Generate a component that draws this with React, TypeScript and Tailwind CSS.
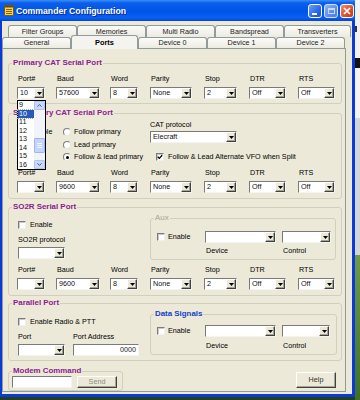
import React from "react";

const txt = "text-[7.2px] leading-[8px] text-black whitespace-nowrap";

function Arrow() {
  return (
    <div className="w-[10px] h-[10px] shrink-0 bg-[#ece9d8] border border-t-white border-l-white border-b-[#404040] border-r-[#404040] shadow-[inset_-1px_-1px_0_#a3a396] flex items-center justify-center">
      <svg width="5" height="3" viewBox="0 0 5 3">
        <path d="M0 0H5L2.5 3Z" fill="#000" />
      </svg>
    </div>
  );
}

function Combo({ w, value = "", children }: { w: string; value?: string; children?: React.ReactNode }) {
  return (
    <div className={`relative h-[12px] ${w} flex bg-white border border-t-[#7a7a7a] border-l-[#7a7a7a] border-b-[#f4f4f0] border-r-[#f4f4f0]`}>
      <span className="flex-1 pl-[2px] text-[7.2px] leading-[10px] text-[#111] overflow-hidden whitespace-nowrap">{value}</span>
      <Arrow />
      {children}
    </div>
  );
}

function TextBox({ w, value = "" }: { w: string; value?: string }) {
  return (
    <div className={`h-[12px] ${w} flex justify-end bg-white border border-t-[#7a7a7a] border-l-[#7a7a7a] border-b-[#f4f4f0] border-r-[#f4f4f0]`}>
      <span className="pr-[2px] text-[7.2px] leading-[10px] text-[#222]">{value}</span>
    </div>
  );
}

function Check({ checked }: { checked?: boolean }) {
  return (
    <div className="w-[8px] h-[8px] shrink-0 bg-white border border-t-[#7c7c7c] border-l-[#7c7c7c] border-b-[#f0f0f0] border-r-[#f0f0f0] shadow-[inset_1px_1px_0_#c8c8c8] flex items-center justify-center">
      {checked && (
        <svg width="6" height="6" viewBox="0 0 6 6">
          <path d="M0.8 2.8L2.3 4.4L5.2 1.2" stroke="#000" strokeWidth="1.3" fill="none" />
        </svg>
      )}
    </div>
  );
}

function Radio({ checked }: { checked?: boolean }) {
  return (
    <div className="w-[8px] h-[8px] shrink-0 rounded-full bg-white border border-t-[#7c7c7c] border-l-[#7c7c7c] border-b-[#e6e6e0] border-r-[#e6e6e0] flex items-center justify-center">
      {checked && <div className="w-[3px] h-[3px] rounded-full bg-black" />}
    </div>
  );
}

function Group({
  title,
  cls,
  tc,
  children,
}: {
  title: string;
  cls: string;
  tc: string;
  children?: React.ReactNode;
}) {
  return (
    <div className={`relative shrink-0 border border-[#d0d0bf] rounded-[3px] ${cls}`}>
      <span className={`absolute left-[3px] top-[-6px] px-[1px] bg-[#ece9d8] text-[7.9px] leading-[10px] whitespace-nowrap ${tc}`}>
        {title}
      </span>
      {children}
    </div>
  );
}

function DropList() {
  const items = ["9", "10", "11", "12", "13", "14", "15", "16"];
  return (
    <div className="absolute left-[-1px] top-[12px] w-[29px] h-[70px] z-30 flex bg-white border border-black">
      <div className="w-[16px] flex flex-col">
        {items.map((it) => (
          <div
            key={it}
            className={`h-[8.5px] pl-[1px] text-[7.2px] leading-[8.5px] ${
              it === "10" ? "bg-[#2858b8] text-white outline outline-1 outline-dotted outline-[#9ab]" : "text-[#111]"
            }`}
          >
            {it}
          </div>
        ))}
      </div>
      <div className="w-[11px] flex flex-col bg-[#f2f3f8]">
        <div className="h-[9px] bg-[#c9d8fb] border border-[#b0c4f2] rounded-[1px] flex items-center justify-center">
          <svg width="5" height="3" viewBox="0 0 5 3">
            <path d="M0.5 2.6L2.5 0.6L4.5 2.6" stroke="#3c5a9a" strokeWidth="1" fill="none" />
          </svg>
        </div>
        <div className="h-[28px]" />
        <div className="h-[15px] bg-[#c3d5fc] border border-[#9db6ee] rounded-[1px] flex flex-col items-center justify-center gap-[1px]">
          <div className="w-[5px] h-[1px] bg-[#eef3ff]" />
          <div className="w-[5px] h-[1px] bg-[#eef3ff]" />
          <div className="w-[5px] h-[1px] bg-[#eef3ff]" />
        </div>
        <div className="flex-1" />
        <div className="h-[9px] bg-[#c9d8fb] border border-[#b0c4f2] rounded-[1px] flex items-center justify-center">
          <svg width="5" height="3" viewBox="0 0 5 3">
            <path d="M0.5 0.4L2.5 2.4L4.5 0.4" stroke="#3c5a9a" strokeWidth="1" fill="none" />
          </svg>
        </div>
      </div>
    </div>
  );
}

const labels = ["Port#", "Baud", "Word", "Parity", "Stop", "DTR", "RTS"];
const widths = ["w-[28px]", "w-[44px]", "w-[28px]", "w-[42px]", "w-[33px]", "w-[37px]", "w-[37px]"];

function PortRow({ values, list }: { values: string[]; list?: boolean }) {
  return (
    <div className="grid grid-cols-[39px_54px_40px_54px_45px_49px_37px]">
      {labels.map((l, i) => (
        <div key={l} className="flex flex-col">
          <span className={`${txt} pl-[1px] h-[8px]`}>{l}</span>
          <div className="mt-[4px]">
            <Combo w={widths[i]} value={values[i]}>
              {list && i === 0 && <DropList />}
            </Combo>
          </div>
        </div>
      ))}
    </div>
  );
}

function TitleBar() {
  return (
    <div className="h-[21px] shrink-0 flex items-center bg-[linear-gradient(180deg,#3d8ff8_0%,#0b5fec_14%,#0054e6_55%,#0860f4_85%,#0345d2_100%)]">
      <svg className="ml-[4px]" width="10" height="11" viewBox="0 0 10 11">
        <rect x="0.5" y="0.5" width="9" height="10" fill="#f3d35a" stroke="#7a5a10" />
        <rect x="0.5" y="0.5" width="9" height="2" fill="#6a4a0c" />
        <path d="M2 4.5H8M2 6.5H8M2 8.5H8" stroke="#7a5a10" strokeWidth="0.9" />
      </svg>
      <span className="ml-[2px] text-white font-bold text-[8.7px] leading-[10px] [text-shadow:1px_1px_0_#0c2a8c] whitespace-nowrap">
        Commander Configuration
      </span>
      <div className="ml-auto mr-[1px] flex gap-[2px]">
        <div className="w-[14px] h-[14px] rounded-[3px] border border-white bg-[linear-gradient(135deg,#6aa0ff,#2a68ec_60%,#1c55d8)] relative">
          <div className="absolute left-[3px] top-[8px] w-[5px] h-[2px] bg-white" />
        </div>
        <div className="w-[14px] h-[14px] rounded-[3px] border border-[#d8e4fc] bg-[linear-gradient(135deg,#8fb6fb,#5b8cf0_60%,#4d7ce6)] relative">
          <div className="absolute left-[3px] top-[3px] w-[7px] h-[6px] border border-t-[2px] border-[#c8d8fa]" />
        </div>
        <div className="w-[14px] h-[14px] rounded-[3px] border border-white bg-[linear-gradient(135deg,#f0906c,#e0532e_55%,#c43a1a)] flex items-center justify-center">
          <svg width="8" height="8" viewBox="0 0 8 8">
            <path d="M1 1L7 7M7 1L1 7" stroke="#fff" strokeWidth="1.6" />
          </svg>
        </div>
      </div>
    </div>
  );
}

function Tabs() {
  const back = ["Filter Groups", "Memories", "Multi Radio", "Bandspread", "Transverters"];
  const front = ["General", "Ports", "Device 0", "Device 1", "Device 2"];
  const bw = ["w-[69px]", "w-[69px]", "w-[69px]", "w-[69px]", "w-[67px]"];
  const fw = ["w-[69px]", "w-[67px]", "w-[69px]", "w-[69px]", "w-[69px]"];
  return (
    <div className="pt-[4px] shrink-0">
      <div className="flex ml-[6px] h-[12px]">
        {back.map((t, i) => (
          <div
            key={t}
            className={`${bw[i]} h-[12px] shrink-0 border border-b-0 border-[#919b9c] rounded-t-[3px] bg-[linear-gradient(#fbfbf8,#ecebe2)] flex items-center justify-center text-[7.2px] leading-[8px] text-[#222]`}
          >
            {t}
          </div>
        ))}
      </div>
      <div className="relative z-10 flex h-[11px] items-end">
        {front.map((t, i) =>
          i === 1 ? (
            <div
              key={t}
              className={`${fw[i]} h-[14px] -mb-[1px] shrink-0 border border-b-0 border-[#919b9c] rounded-t-[3px] bg-[#f4f3ee] flex items-center justify-center pt-[1px] text-[7.4px] leading-[8px] font-bold text-black`}
            >
              {t}
            </div>
          ) : (
            <div
              key={t}
              className={`${fw[i]} h-[11px] shrink-0 border border-b-0 border-[#919b9c] rounded-t-[3px] bg-[linear-gradient(#fbfbf8,#ecebe2)] flex items-center justify-center text-[7.2px] leading-[8px] text-[#222]`}
            >
              {t}
            </div>
          )
        )}
      </div>
    </div>
  );
}

const purple = "font-bold text-[#8a1c8e]";

function Panel() {
  return (
    <div className="w-[344px] h-[344px] shrink-0 border border-[#919b9c] bg-[#ece9d8] flex flex-col">
      <Group title="Primary CAT Serial Port" cls="mt-[14px] ml-[5px] w-[334px] h-[41px]" tc={purple}>
        <div className="pl-[8px] pt-[11px]">
          <PortRow values={["10", "57600", "8", "None", "2", "Off", "Off"]} list />
        </div>
      </Group>

      <Group title="Secondary CAT Serial Port" cls="mt-[9px] ml-[5px] w-[334px] h-[86px]" tc={purple}>
        <div className="pl-[8px]">
          <div className="h-[55px] grid grid-cols-[46px_87px_1fr]">
            <div className="pt-[12px]">
              <div className="h-[12px] pl-[1px] flex items-center gap-[4px]">
                <Check />
                <span className={txt}>Enable</span>
              </div>
            </div>
            <div className="pt-[12px] flex flex-col">
              {[
                ["Follow primary", false],
                ["Lead primary", false],
                ["Follow & lead primary", true],
              ].map(([l, c]) => (
                <div key={l as string} className="h-[12.5px] flex items-center gap-[3px]">
                  <Radio checked={c as boolean} />
                  <span className={txt}>{l as string}</span>
                </div>
              ))}
            </div>
            <div className="pt-[7px] flex flex-col">
              <span className={`${txt} h-[8px]`}>CAT protocol</span>
              <div className="mt-[2px]">
                <Combo w="w-[87px]" value="Elecraft" />
              </div>
              <div className="mt-[8px] h-[12px] pl-[6px] flex items-center gap-[4px]">
                <Check checked />
                <span className={txt}>Follow &amp; Lead Alternate VFO when Split</span>
              </div>
            </div>
          </div>
          <PortRow values={["", "9600", "8", "None", "2", "Off", "Off"]} />
        </div>
      </Group>

      <Group title="SO2R Serial Port" cls="mt-[8px] ml-[5px] w-[334px] h-[89px]" tc={purple}>
        <div className="pl-[8px]">
          <div className="h-[58px] flex">
            <div className="w-[133px] pt-[12px] flex flex-col">
              <div className="h-[10px] pl-[1px] flex items-center gap-[4px]">
                <Check />
                <span className={txt}>Enable</span>
              </div>
              <span className={`${txt} mt-[6px] pl-[1px] h-[8px]`}>SO2R protocol</span>
              <div className="mt-[3px] pl-[1px]">
                <Combo w="w-[47px]" />
              </div>
            </div>
            <Group title="Aux" cls="mt-[10px] w-[186px] h-[42px]" tc="text-[#a3a39a]">
              <div className="pt-[12px]">
                <div className="grid grid-cols-[54px_77px_49px] items-center h-[12px]">
                  <div className="pl-[6px] flex items-center gap-[3px]">
                    <Check />
                    <span className={txt}>Enable</span>
                  </div>
                  <Combo w="w-[71px]" />
                  <Combo w="w-[49px]" />
                </div>
                <div className="grid grid-cols-[54px_77px_49px] mt-[4px]">
                  <span />
                  <span className={`${txt} pl-[1px]`}>Device</span>
                  <span className={`${txt} pl-[1px]`}>Control</span>
                </div>
              </div>
            </Group>
          </div>
          <PortRow values={["", "9600", "8", "None", "2", "Off", "Off"]} />
        </div>
      </Group>

      <Group title="Parallel Port" cls="mt-[7px] ml-[5px] w-[334px] h-[58px]" tc={purple}>
        <div className="pl-[8px] flex">
          <div className="w-[133px] pt-[13px] flex flex-col">
            <div className="h-[10px] pl-[1px] flex items-center gap-[4px]">
              <Check />
              <span className={txt}>Enable Radio &amp; PTT</span>
            </div>
            <div className="mt-[6px] grid grid-cols-[56px_1fr]">
              <span className={`${txt} pl-[1px] h-[8px]`}>Port</span>
              <span className={`${txt} h-[8px]`}>Port Address</span>
            </div>
            <div className="mt-[3px] grid grid-cols-[56px_1fr]">
              <div className="pl-[1px]">
                <Combo w="w-[47px]" />
              </div>
              <TextBox w="w-[66px]" value="0000" />
            </div>
          </div>
          <Group title="Data Signals" cls="mt-[10px] w-[187px] h-[41px]" tc="font-bold text-[#1441c8]">
            <div className="pt-[10px]">
              <div className="grid grid-cols-[54px_77px_49px] items-center h-[12px]">
                <div className="pl-[6px] flex items-center gap-[3px]">
                  <Check />
                  <span className={txt}>Enable</span>
                </div>
                <Combo w="w-[71px]" />
                <Combo w="w-[48px]" />
              </div>
              <div className="grid grid-cols-[54px_77px_49px] mt-[5px]">
                <span />
                <span className={`${txt} pl-[1px]`}>Device</span>
                <span className={`${txt} pl-[1px]`}>Control</span>
              </div>
            </div>
          </Group>
        </div>
      </Group>

      <div className="mt-[10px] ml-[5px] w-[334px] flex items-start">
        <Group title="Modem Command" cls="w-[115px] h-[20px]" tc={purple}>
          <div className="pl-[3px] pt-[4px] flex items-center gap-[5px]">
            <TextBox w="w-[60px]" />
            <div className="w-[40px] h-[12px] flex items-center justify-center bg-[#ece9d8] border border-t-white border-l-white border-b-[#404040] border-r-[#404040] shadow-[inset_-1px_-1px_0_#a3a396]">
              <span className="text-[7.2px] leading-[8px] text-[#8a8a84]">Send</span>
            </div>
          </div>
        </Group>
        <div className="ml-auto mr-[6px] mt-[1px] w-[40px] h-[16px] flex items-center justify-center bg-[#ece9d8] border border-t-white border-l-white border-b-[#404040] border-r-[#404040] shadow-[inset_-1px_-1px_0_#a3a396]">
          <span className="text-[7.2px] leading-[8px] text-[#333]">Help</span>
        </div>
      </div>
    </div>
  );
}

function Desktop() {
  return (
    <div className="w-[5px] h-[400px] flex flex-col shrink-0">
      <div className="h-[26px] bg-[#f2f2f2]" />
      <div className="h-[6px] bg-[#f2f2f2] flex">
        <div className="w-[2px] bg-[#333]" />
      </div>
      <div className="h-[26px] bg-[#f2f2f2]" />
      <div className="h-[10px] bg-[#111]" />
      <div className="h-[50px] bg-[#f4f4f4]" />
      <div className="h-[137px] bg-[#d2d6dc]" />
      <div className="flex-1 bg-[linear-gradient(#6f9a4a,#3f6e2a)]" />
    </div>
  );
}

export default function App() {
  return (
    <div className="w-[360px] h-[400px] flex bg-[#22401c] overflow-hidden font-['Liberation_Sans',Arial,sans-serif]">
      <div className="w-[355px] h-[397px] flex flex-col shrink-0">
        <TitleBar />
        <div className="flex-1 flex flex-col bg-[#ece9d8] border-l-[2px] border-r-[3px] border-b-[3px] border-[#0a3ad8]">
          <Tabs />
          <Panel />
        </div>
      </div>
      <Desktop />
    </div>
  );
}
